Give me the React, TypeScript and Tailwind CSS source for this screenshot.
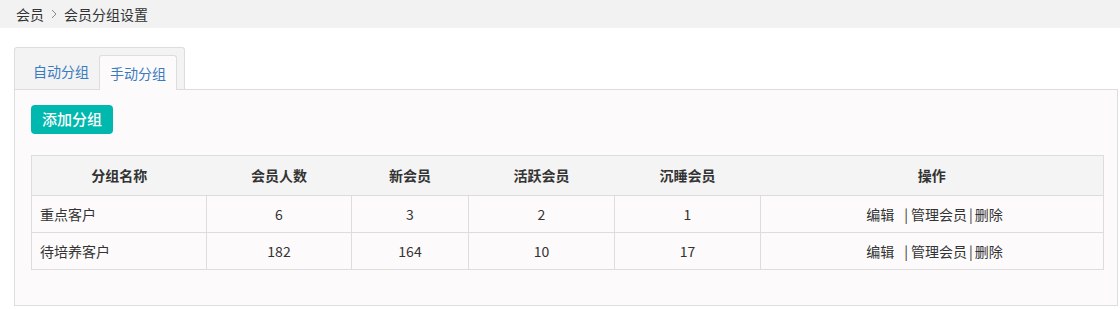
import React from 'react'

const rows = [
  { name: '重点客户', total: 6, fresh: 3, active: 2, sleep: 1 },
  { name: '待培养客户', total: 182, fresh: 164, active: 10, sleep: 17 },
]

export default function App() {
  return (
    <div className="min-h-screen bg-white text-[14px] text-[#333]" style={{ fontFamily: '"Noto Sans CJK SC", "Noto Sans", sans-serif' }}>
      {/* breadcrumb */}
      <div className="h-[28px] bg-[#f2f2f2] pl-[16px] flex items-center gap-[6px]">
        <span>会员</span>
        <svg width="6" height="10" viewBox="0 0 6 10" className="mx-[1px]">
          <path d="M1 1l4 4-4 4" fill="none" stroke="#888" strokeWidth="1" />
        </svg>
        <span>会员分组设置</span>
      </div>

      <div className="pl-[14px] pr-[2px] pt-[19px]">
        {/* tabs */}
        <div className="inline-flex items-end h-[42px] bg-[#f3f3f3] border border-b-0 border-[#ddd] rounded-t-[3px] pl-[8px] pr-[7px] pt-[7px]">
          <div className="h-[35px] px-[10px] flex items-center text-[#3a7bc0]">自动分组</div>
          <div className="h-[35px] px-[10px] flex items-center text-[#3a7bc0] bg-[#fcfafb] border border-b-0 border-[#ddd] rounded-t-[3px] -mb-px relative">手动分组</div>
        </div>

        {/* panel */}
        <div className="border border-[#ddd] bg-[#fcfafb] pt-[15px] pl-[16px] pr-[14px] pb-[35px]">
          <button className="h-[29px] w-[82px] rounded-[4px] bg-[#00b8ad] text-white text-[15px] font-medium flex items-center justify-center">
            添加分组
          </button>

          <table className="mt-[21px] w-[1072px] border-collapse table-fixed">
            <colgroup>
              <col className="w-[175px]" />
              <col className="w-[145px]" />
              <col className="w-[117px]" />
              <col className="w-[146px]" />
              <col className="w-[146px]" />
              <col className="w-[343px]" />
            </colgroup>
            <thead>
              <tr className="h-[40px] bg-[#f4f4f4]">
                {['分组名称', '会员人数', '新会员', '活跃会员', '沉睡会员', '操作'].map((h) => (
                  <th key={h} className="border-y border-[#ddd] first:border-l last:border-r font-bold text-center text-[#333]">
                    {h}
                  </th>
                ))}
              </tr>
            </thead>
            <tbody>
              {rows.map((r) => (
                <tr key={r.name} className="h-[37px]">
                  <td className="border border-[#ddd] pl-[8px] text-left">{r.name}</td>
                  <td className="border border-[#ddd] text-center">{r.total}</td>
                  <td className="border border-[#ddd] text-center">{r.fresh}</td>
                  <td className="border border-[#ddd] text-center">{r.active}</td>
                  <td className="border border-[#ddd] text-center">{r.sleep}</td>
                  <td className="border border-[#ddd] text-center">
                    <span className="inline-flex items-center pl-[5px]">
                      <span>编辑</span>
                      <span className="ml-[10px] mr-[3px]">|</span>
                      <span>管理会员</span>
                      <span className="mx-[2px]">|</span>
                      <span>删除</span>
                    </span>
                  </td>
                </tr>
              ))}
            </tbody>
          </table>
        </div>
      </div>
    </div>
  )
}
